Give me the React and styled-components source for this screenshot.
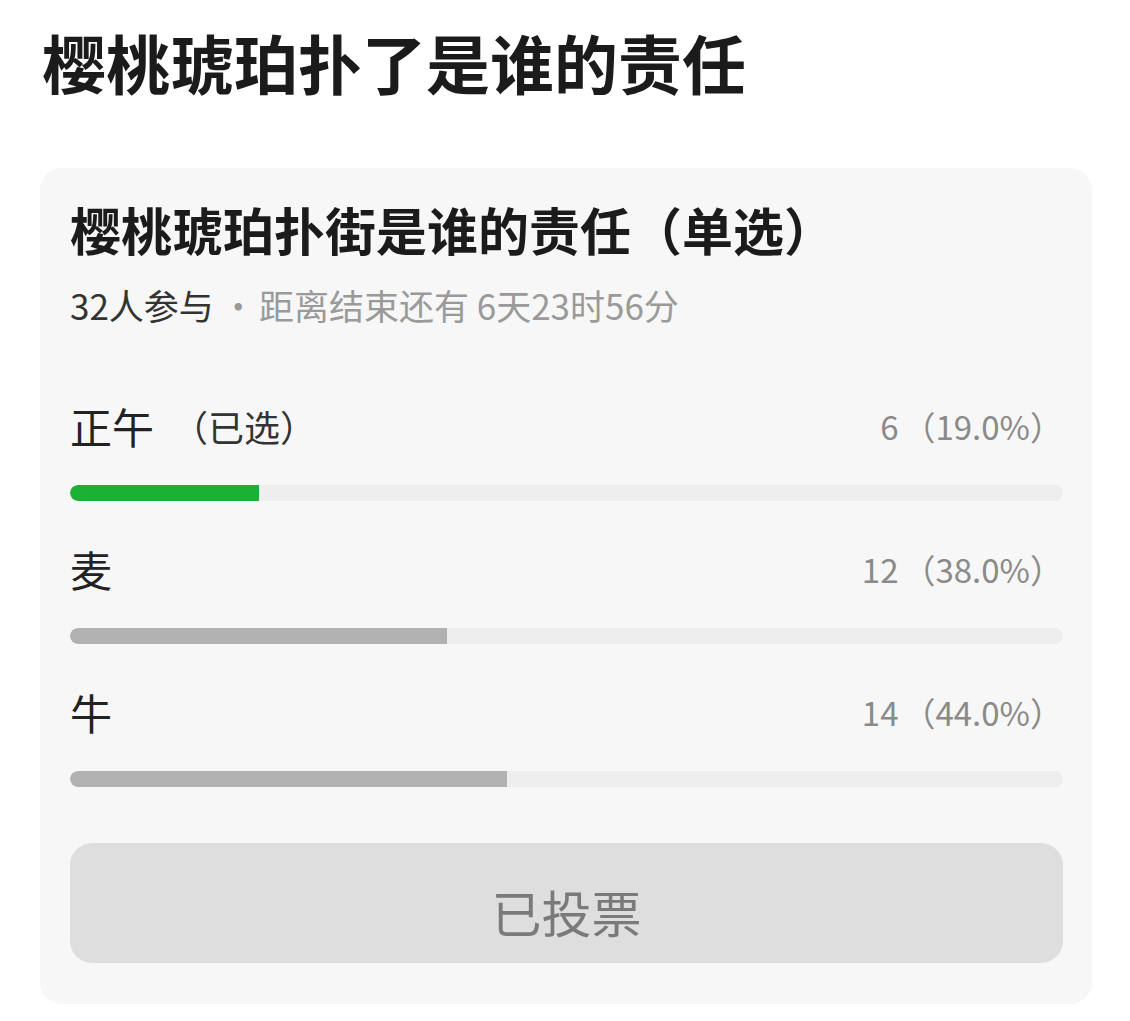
import React from "react";
import styled, { createGlobalStyle } from "styled-components";

const GlobalStyle = createGlobalStyle`
  html, body {
    margin: 0;
    padding: 0;
    background: #ffffff;
  }
  body {
    font-family: "Noto Sans CJK SC", "Noto Sans", sans-serif;
    color: #1a1a1a;
  }
`;

const Page = styled.div`
  width: 1130px;
  height: 1021px;
  box-sizing: border-box;
  padding: 29px 38px 0 40px;
  overflow: hidden;
`;

const Heading = styled.h1`
  margin: 0 0 75px 2px;
  font-size: 64px;
  line-height: 1;
  font-weight: 700;
  color: #1b1b1b;
`;

const Card = styled.section`
  width: 1052px;
  box-sizing: border-box;
  padding: 36px 29px 41px 30px;
  background: #f7f7f7;
  border-radius: 22px;
`;

const CardTitle = styled.h2`
  margin: 0;
  font-size: 51px;
  line-height: 1;
  font-weight: 700;
  color: #1b1b1b;
`;

const Meta = styled.div`
  margin-top: 32px;
  font-size: 35px;
  line-height: 1;
  color: #9a9a9a;
  display: flex;
  align-items: center;
`;

const Count = styled.span`
  color: #333333;
`;

const Dot = styled.span`
  margin: 0 3px 0 7px;
`;

const Options = styled.div`
  margin-top: 83px;
  display: flex;
  flex-direction: column;
  gap: 47px;
`;

const Option = styled.div`
  display: flex;
  flex-direction: column;
  gap: 38px;
`;

const OptionHead = styled.div`
  display: flex;
  justify-content: space-between;
  align-items: center;
  height: 42px;
`;

const Label = styled.span`
  font-size: 42px;
  line-height: 1;
  color: #222222;
  display: flex;
  align-items: center;
`;

const Picked = styled.span`
  font-size: 36px;
  margin-left: 18px;
  color: #333333;
`;

const Value = styled.span`
  font-size: 33px;
  line-height: 1;
  color: #8a8a8a;
`;

const Votes = styled.span`
  margin-right: 4px;
`;

const Track = styled.div`
  height: 16px;
  border-radius: 8px;
  background: #eeeeee;
  overflow: hidden;
`;

const Fill = styled.div`
  height: 100%;
  border-radius: 8px 0 0 8px;
  background: ${p => (p.$picked ? "#1bb135" : "#b1b1b1")};
`;

const VotedButton = styled.button`
  margin-top: 56px;
  width: 100%;
  height: 120px;
  box-sizing: border-box;
  padding: 16px 0 0;
  border: none;
  border-radius: 22px;
  background: #dedede;
  font-family: inherit;
  font-size: 50px;
  line-height: 1;
  color: #7a7a7a;
  display: flex;
  align-items: center;
  justify-content: center;
`;

const options = [
  { label: "正午", votes: 6, pct: 19, picked: true },
  { label: "麦", votes: 12, pct: 38 },
  { label: "牛", votes: 14, pct: 44 },
];

const App = () => (
  <>
    <GlobalStyle />
    <Page>
      <Heading>樱桃琥珀扑了是谁的责任</Heading>
      <Card>
        <CardTitle>樱桃琥珀扑街是谁的责任（单选）</CardTitle>
        <Meta>
          <Count>32人参与</Count>
          <Dot>·</Dot>
          距离结束还有 6天23时56分
        </Meta>
        <Options>
          {options.map(o => (
            <Option key={o.label}>
              <OptionHead>
                <Label>
                  {o.label}
                  {o.picked && <Picked>（已选）</Picked>}
                </Label>
                <Value>
                  <Votes>{o.votes}</Votes>（{o.pct.toFixed(1)}%）
                </Value>
              </OptionHead>
              <Track>
                <Fill $picked={o.picked} style={{ width: `${o.pct}%` }} />
              </Track>
            </Option>
          ))}
        </Options>
        <VotedButton>已投票</VotedButton>
      </Card>
    </Page>
  </>
);

export default App;
